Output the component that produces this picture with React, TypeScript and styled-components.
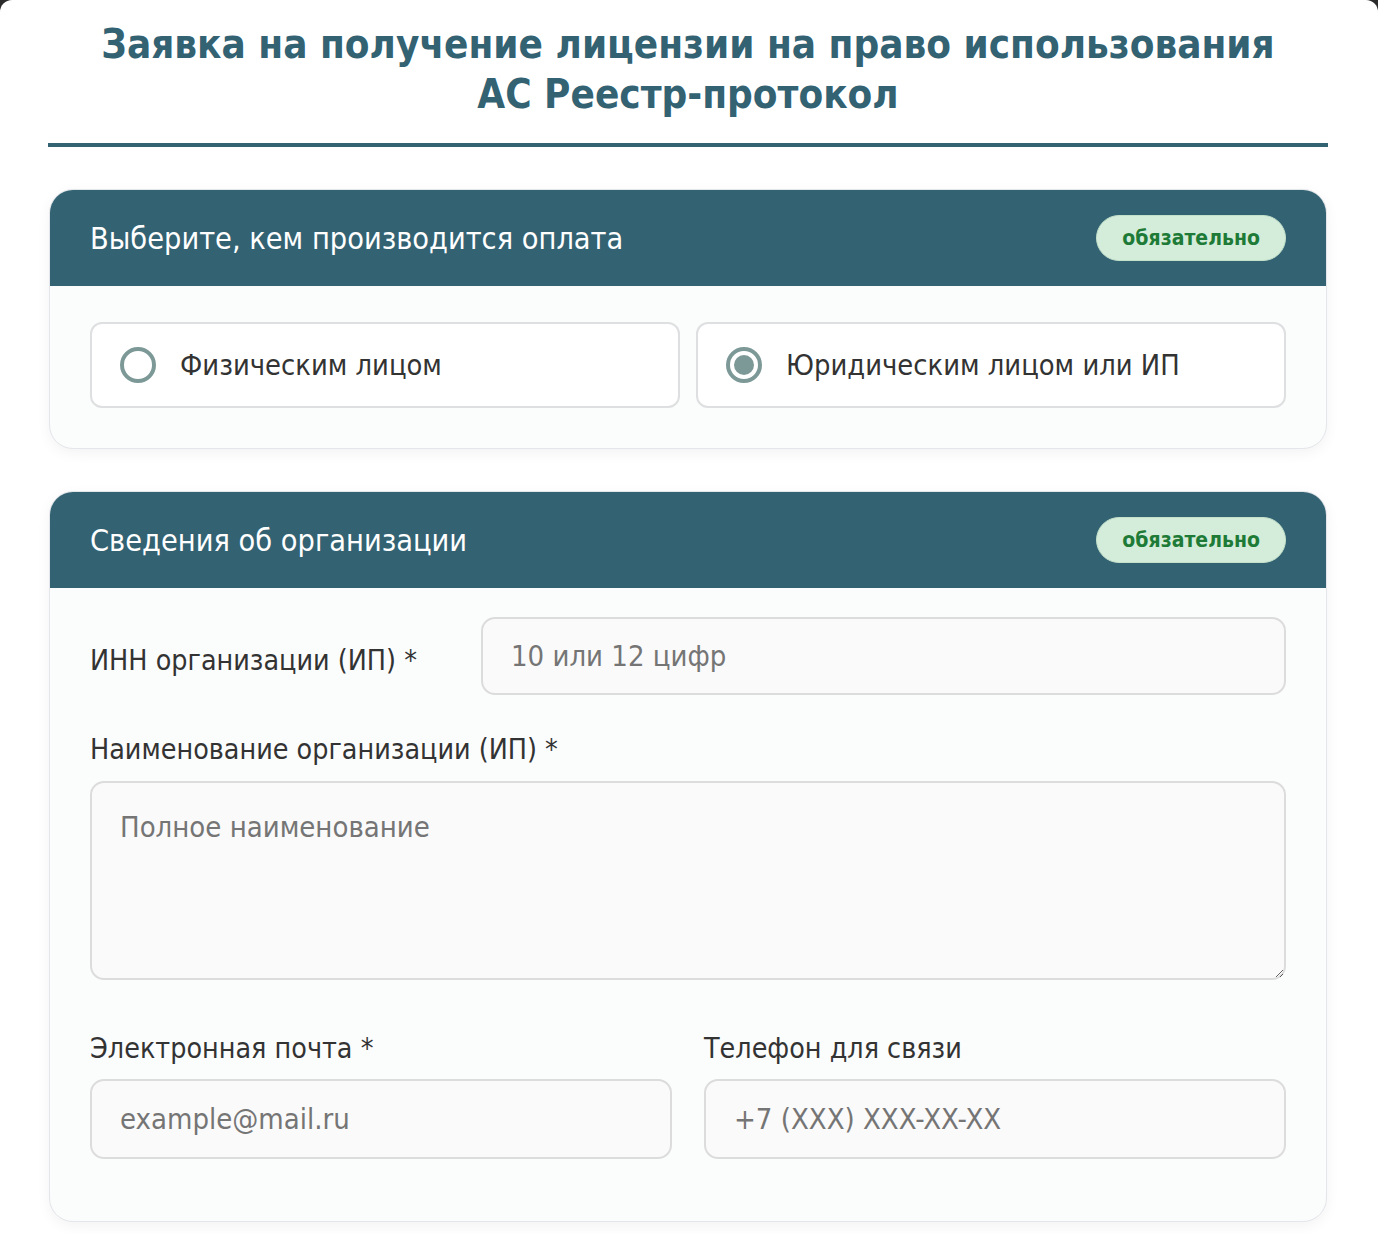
import React from "react";
import styled, { createGlobalStyle } from "styled-components";

const Global = createGlobalStyle`
  html { background: #2b2b2b; }
  body {
    margin: 0;
    background: #2b2b2b;
    font-family: "DejaVu Sans Condensed", "DejaVu Sans", sans-serif;
  }
  * { box-sizing: border-box; }
`;

const Page = styled.div`
  background: #ffffff;
  min-height: 1234px;
  border-radius: 12px;
  padding: 19px 50px 40px 48px;
`;

const Title = styled.h1`
  margin: 0;
  padding-bottom: 24px;
  border-bottom: 4px solid #336273;
  text-align: center;
  color: #336273;
  font-family: "DejaVu Sans Condensed", "DejaVu Sans", sans-serif;
  font-weight: bold;
  font-size: 40px;
  line-height: 50px;
`;

const Card = styled.section<{ $top: number }>`
  margin: ${(p) => p.$top}px 1px 0;
  border: 1px solid #e3e6ea;
  border-radius: 24px;
  background: #fbfcfc;
  box-shadow: 0 4px 14px rgba(0, 0, 0, 0.05);
  overflow: hidden;
`;

const CardHeader = styled.header`
  height: 96px;
  background: #336273;
  display: flex;
  align-items: center;
  justify-content: space-between;
  padding: 0 40px;
`;

const CardTitle = styled.h2`
  margin: 0;
  color: #ffffff;
  font-weight: normal;
  font-size: 30.4px;
`;

const Badge = styled.span`
  height: 46px;
  padding: 0 25px;
  display: inline-flex;
  align-items: center;
  border-radius: 23px;
  background: #d4edda;
  border: 1px solid #c3e0ca;
  color: #1e7b37;
  font-weight: bold;
  font-size: 21px;
`;

const CardBody = styled.div<{ $pad: string }>`
  padding: ${(p) => p.$pad};
`;

const RadioGrid = styled.div`
  display: grid;
  grid-template-columns: 1fr 1fr;
  gap: 16px;
`;

const RadioOption = styled.label`
  height: 86px;
  display: flex;
  align-items: center;
  gap: 24px;
  padding-left: 28px;
  background: #ffffff;
  border: 2px solid #dedfe0;
  border-radius: 12px;
  font-size: 28.8px;
  color: #333333;
  cursor: pointer;
`;

const RadioDot = styled.span<{ $checked?: boolean }>`
  width: 36px;
  height: 36px;
  border-radius: 50%;
  border: 4px solid #7d9997;
  background: #ffffff;
  display: flex;
  align-items: center;
  justify-content: center;
  flex-shrink: 0;
  &::after {
    content: "";
    width: 20px;
    height: 20px;
    border-radius: 50%;
    background: ${(p) => (p.$checked ? "#7d9997" : "transparent")};
  }
`;

const InlineRow = styled.div`
  display: grid;
  grid-template-columns: 391px 1fr;
  align-items: center;
`;

const Label = styled.div`
  font-size: 28.4px;
  line-height: 34px;
  color: #333333;
`;

const InlineLabel = styled(Label)`
  padding-top: 10px;
`;

const Input = styled.input`
  width: 100%;
  height: 78px;
  padding: 0 28px;
  border: 2px solid #dcdcdc;
  border-radius: 14px;
  background: #fafafa;
  font-family: inherit;
  font-size: 29px;
  color: #333;
  outline: none;
  &::placeholder { color: #757575; }
`;

const TallInput = styled(Input)`
  height: 80px;
`;

const TextArea = styled.textarea`
  display: block;
  width: 100%;
  height: 199px;
  margin-top: 14px;
  padding: 26px 28px;
  border: 2px solid #dcdcdc;
  border-radius: 14px;
  background: #fafafa;
  font-family: inherit;
  font-size: 29px;
  line-height: 36px;
  color: #333;
  outline: none;
  resize: vertical;
  &::placeholder { color: #757575; }
`;

const Field = styled.div<{ $top: number }>`
  margin-top: ${(p) => p.$top}px;
`;

const TwoCols = styled.div`
  display: grid;
  grid-template-columns: 1fr 1fr;
  gap: 32px;
  margin-top: 52px;
`;

const FieldCol = styled.div`
  display: flex;
  flex-direction: column;
  gap: 13px;
`;

export default function App() {
  return (
    <>
      <Global />
      <Page>
        <Title>
          Заявка на получение лицензии на право использования
          <br />
          АС Реестр-протокол
        </Title>

        <Card $top={42}>
          <CardHeader>
            <CardTitle>Выберите, кем производится оплата</CardTitle>
            <Badge>обязательно</Badge>
          </CardHeader>
          <CardBody $pad="36px 40px 40px">
            <RadioGrid>
              <RadioOption>
                <RadioDot />
                Физическим лицом
              </RadioOption>
              <RadioOption>
                <RadioDot $checked />
                Юридическим лицом или ИП
              </RadioOption>
            </RadioGrid>
          </CardBody>
        </Card>

        <Card $top={42}>
          <CardHeader>
            <CardTitle>Сведения об организации</CardTitle>
            <Badge>обязательно</Badge>
          </CardHeader>
          <CardBody $pad="29px 40px 62px">
            <InlineRow>
              <InlineLabel>ИНН организации (ИП) *</InlineLabel>
              <Input placeholder="10 или 12 цифр" />
            </InlineRow>
            <Field $top={38}>
              <Label>Наименование организации (ИП) *</Label>
              <TextArea placeholder="Полное наименование" />
            </Field>
            <TwoCols>
              <FieldCol>
                <Label>Электронная почта *</Label>
                <TallInput placeholder="example@mail.ru" />
              </FieldCol>
              <FieldCol>
                <Label>Телефон для связи</Label>
                <TallInput placeholder="+7 (XXX) XXX-XX-XX" />
              </FieldCol>
            </TwoCols>
          </CardBody>
        </Card>
      </Page>
    </>
  );
}
